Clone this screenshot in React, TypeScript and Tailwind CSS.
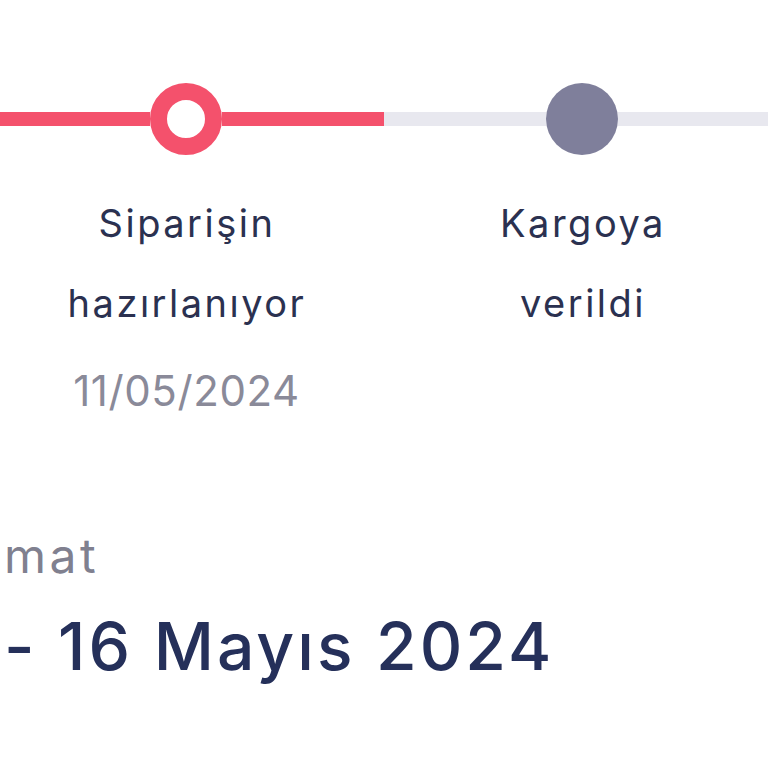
import React from "react";

type Step = {
  title: string[];
  date?: string;
  state: "active" | "pending";
};

const steps: Step[] = [
  { title: ["Siparişin", "hazırlanıyor"], date: "11/05/2024", state: "active" },
  { title: ["Kargoya", "verildi"], state: "pending" },
];

const font = { fontFamily: "Inter, 'Noto Sans', sans-serif" };

function StepColumn({ step }: { step: Step }) {
  const isActive = step.state === "active";
  const lineColor = isActive ? "bg-[#f4516c]" : "bg-[#e8e8ef]";

  return (
    <div className="flex w-[396px] shrink-0 flex-col items-center">
      {/* track with marker */}
      <div className="flex h-[72px] w-full items-center">
        <div className={`h-[14px] flex-1 ${lineColor}`} />
        {isActive ? (
          <div className="h-[72px] w-[72px] shrink-0 rounded-full border-[17px] border-[#f4516c] bg-white" />
        ) : (
          <div className="h-[72px] w-[72px] shrink-0 rounded-full bg-[#7f7f9b]" />
        )}
        <div className={`h-[14px] flex-1 ${lineColor}`} />
      </div>

      <div className="mt-[28px] pl-[2px] text-center text-[38px] leading-[80px] tracking-[2.5px] text-[#2b3150]">
        {step.title.map((line) => (
          <p key={line}>{line}</p>
        ))}
      </div>
      {step.date && (
        <p className="mt-[23px] pl-[1px] text-[42px] leading-[50px] tracking-[0.6px] text-[#8a8a99]">
          {step.date}
        </p>
      )}
    </div>
  );
}

export default function App() {
  return (
    <main
      className="h-[768px] w-[768px] overflow-hidden bg-white pt-[83px]"
      style={font}
    >
      <section className="-ml-[12px] flex">
        {steps.map((step) => (
          <StepColumn key={step.title.join(" ")} step={step} />
        ))}
      </section>

      <section className="mt-[112px] px-[4px]">
        <p className="text-[48px] leading-[56px] tracking-[3.5px] text-[#80808f]">
          mat
        </p>
        <p className="mt-[22px] text-[66px] font-medium leading-[80px] tracking-[3px] text-[#25305a]">
          - 16 Mayıs 2024
        </p>
      </section>
    </main>
  );
}
